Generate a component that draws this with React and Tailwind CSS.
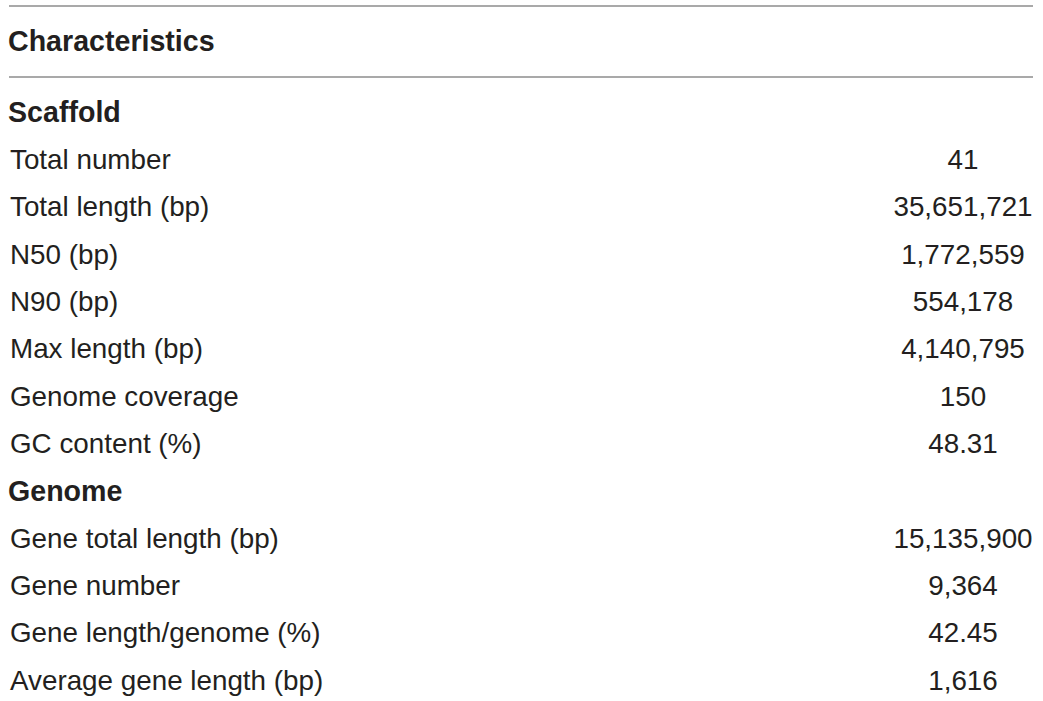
const scaffold = [
  ['Total number', '41'],
  ['Total length (bp)', '35,651,721'],
  ['N50 (bp)', '1,772,559'],
  ['N90 (bp)', '554,178'],
  ['Max length (bp)', '4,140,795'],
  ['Genome coverage', '150'],
  ['GC content (%)', '48.31'],
]

const genome = [
  ['Gene total length (bp)', '15,135,900'],
  ['Gene number', '9,364'],
  ['Gene length/genome (%)', '42.45'],
  ['Average gene length (bp)', '1,616'],
]

function Row({ label, value }) {
  return (
    <div className="flex h-[47.33px] items-center text-[27.8px] leading-none">
      <div className="flex-1 pl-[1px]">{label}</div>
      <div className="w-[160px] text-center whitespace-nowrap">{value}</div>
    </div>
  )
}

function Section({ title }) {
  return (
    <div className="flex h-[47.33px] items-center text-[28.6px] font-bold leading-none">
      <div className="-ml-[1px]">{title}</div>
    </div>
  )
}

export default function App() {
  return (
    <div
      className="w-[1043px] h-[701px] bg-white text-[#231f20] pl-[9px] pt-[5px] overflow-hidden"
      style={{ fontFamily: '"Liberation Sans", Arial, sans-serif' }}
    >
      <div className="w-[1024px] h-[2px] bg-[#a9a9a9]" />
      <div className="flex h-[69px] items-center text-[28.6px] font-bold leading-none">
        <div className="-ml-[1px]">Characteristics</div>
      </div>
      <div className="w-[1024px] h-[2px] bg-[#a9a9a9]" />
      <div className="pt-[11px]">
        <Section title="Scaffold" />
        {scaffold.map(([l, v]) => (
          <Row key={l} label={l} value={v} />
        ))}
        <Section title="Genome" />
        {genome.map(([l, v]) => (
          <Row key={l} label={l} value={v} />
        ))}
      </div>
    </div>
  )
}
